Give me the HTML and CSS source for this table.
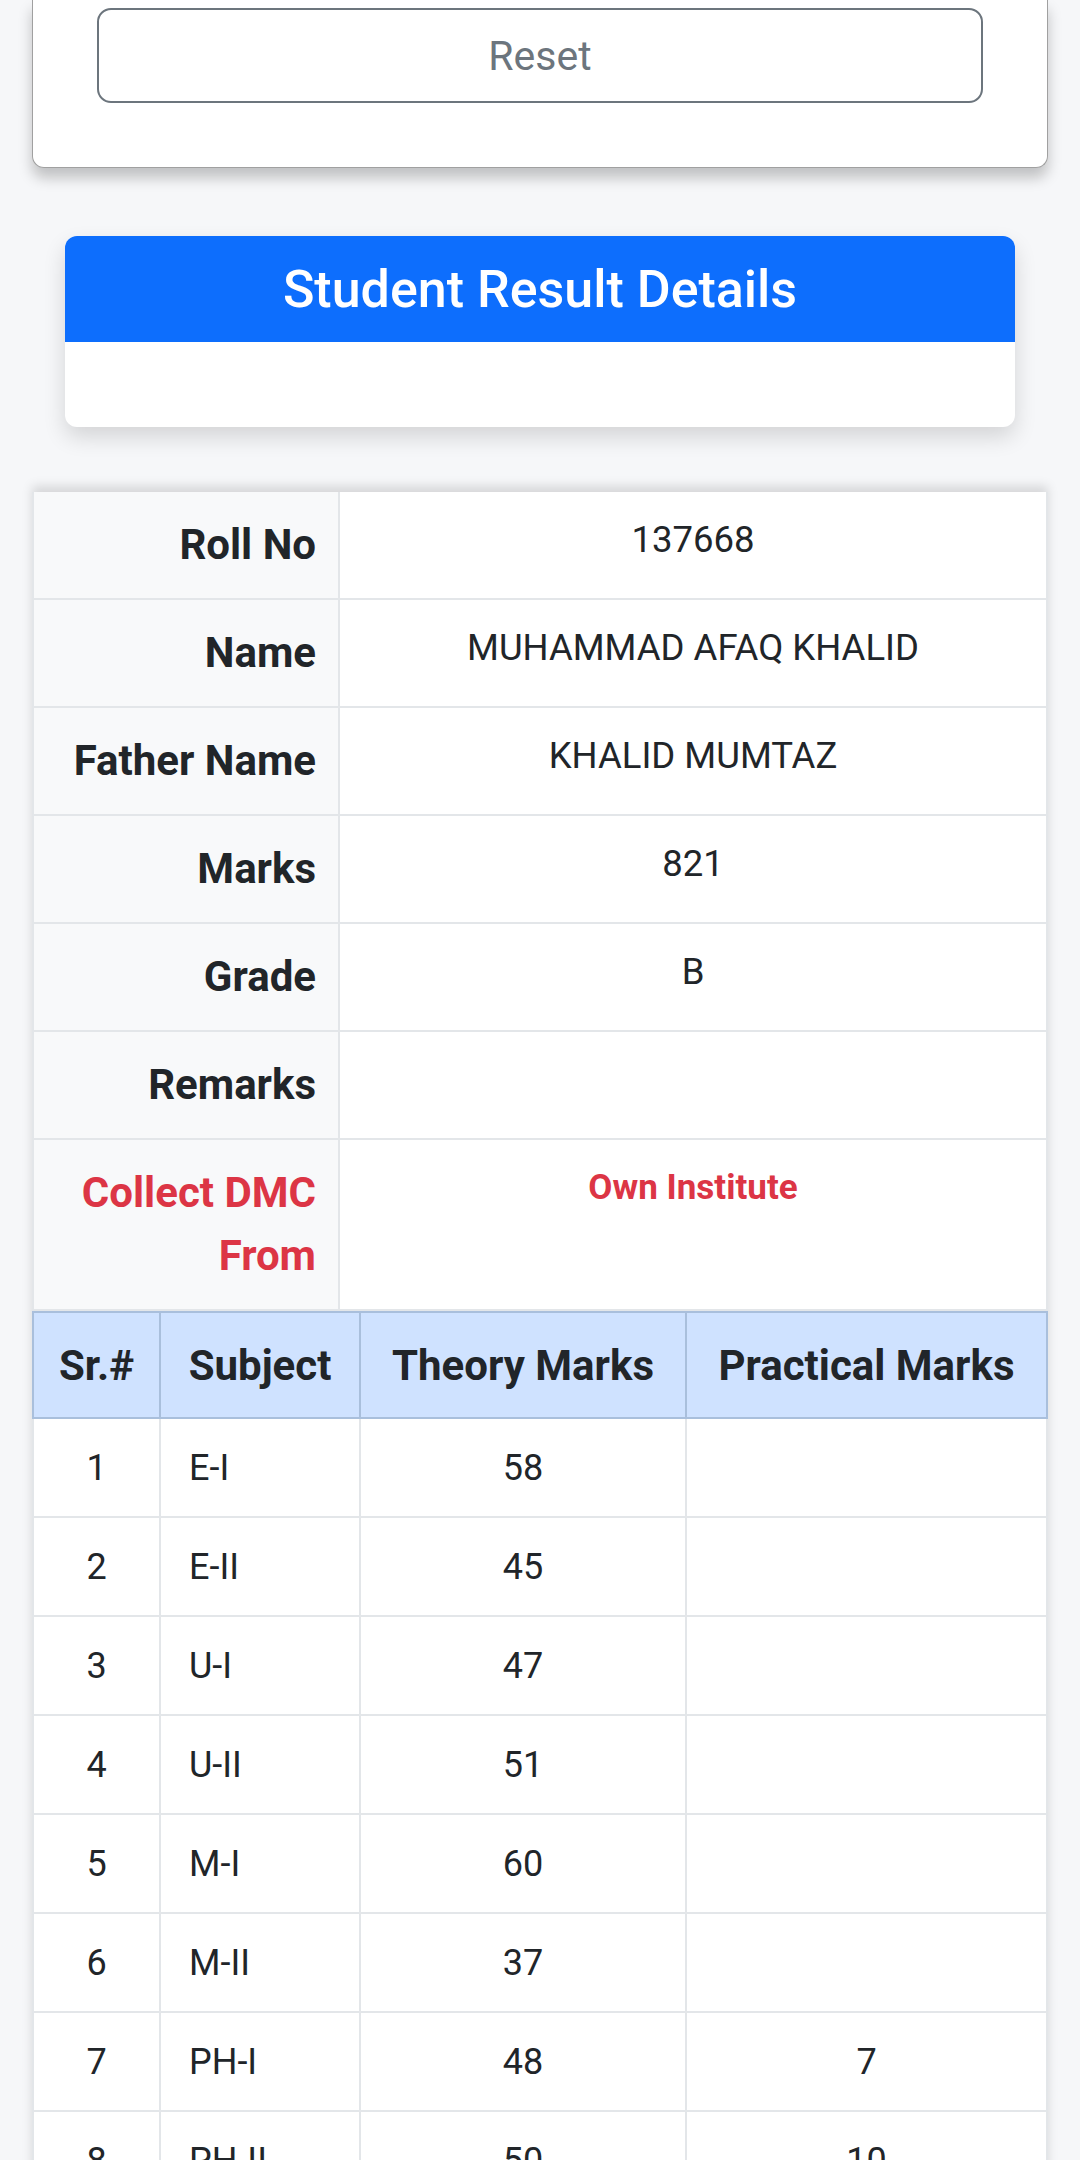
FILE: index.html
```html
<!DOCTYPE html>
<html lang="en">
<head>
  <meta charset="UTF-8" />
  <title>Student Result</title>
  <link rel="stylesheet" href="styles.css">
</head>
<body>

  <!-- Formulario de busca (parte de baixo) -->
  <div class="search-card">
    <button class="btn-reset" type="reset">Reset</button>
  </div>

  <div class="result-card">
    <div class="result-header">Student Result Details</div>
    <div class="result-body"></div>
  </div>

  <div class="result-tables">
    <table class="info-table">
      <tr><th>Roll No</th><td>137668</td></tr>
      <tr><th>Name</th><td>MUHAMMAD AFAQ KHALID</td></tr>
      <tr><th>Father Name</th><td>KHALID MUMTAZ</td></tr>
      <tr><th>Marks</th><td>821</td></tr>
      <tr><th>Grade</th><td>B</td></tr>
      <tr><th>Remarks</th><td></td></tr>
      <tr class="dmc"><th>Collect DMC From</th><td>Own Institute</td></tr>
    </table>

    <table class="marks-table">
      <colgroup>
        <col class="col-sr">
        <col class="col-subject">
        <col class="col-theory">
        <col>
      </colgroup>
      <thead>
        <tr>
          <th>Sr.#</th>
          <th>Subject</th>
          <th>Theory Marks</th>
          <th>Practical Marks</th>
        </tr>
      </thead>
      <tbody>
        <tr><td>1</td><td class="subject">E-I</td><td>58</td><td></td></tr>
        <tr><td>2</td><td class="subject">E-II</td><td>45</td><td></td></tr>
        <tr><td>3</td><td class="subject">U-I</td><td>47</td><td></td></tr>
        <tr><td>4</td><td class="subject">U-II</td><td>51</td><td></td></tr>
        <tr><td>5</td><td class="subject">M-I</td><td>60</td><td></td></tr>
        <tr><td>6</td><td class="subject">M-II</td><td>37</td><td></td></tr>
        <tr><td>7</td><td class="subject">PH-I</td><td>48</td><td>7</td></tr>
        <tr><td>8</td><td class="subject">PH-II</td><td>50</td><td>10</td></tr>
      </tbody>
    </table>
  </div>

</body>
</html>
```

FILE: styles.css
```css
html, body {
  height: 2160px;
  overflow: hidden;
}

body {
  margin: 0;
  font-family: Roboto, "Liberation Sans", Arial, sans-serif;
  background: #f6f7f9;
  color: #212529;
}

/* Card do formulario */
.search-card {
  margin: 0 32px;
  padding: 8px 64px 64px;
  background: #fff;
  border: 1px solid #a0a0a0;
  border-top: none;
  border-radius: 0 0 12px 12px;
  box-shadow: 0 10px 14px rgba(0, 0, 0, 0.22);
}

.btn-reset {
  display: block;
  width: 100%;
  height: 95px;
  background: #fff;
  color: #6c757d;
  border: 2px solid #6c757d;
  border-radius: 14px;
  font-family: inherit;
  font-size: 41px;
}

.result-card {
  margin: 68px 65px 0;
  background: #fff;
  border-radius: 12px;
  overflow: hidden;
  box-shadow: 0 10px 22px rgba(0, 0, 0, 0.14);
}

.result-header {
  height: 106px;
  display: flex;
  align-items: center;
  justify-content: center;
  background: #0d6efd;
  color: #fff;
  font-size: 52px;
  font-weight: 500;
}

.result-body {
  height: 85px;
}

.result-tables {
  margin: 65px 32px 0;
  background: #fff;
  box-shadow: 0 -6px 10px rgba(0, 0, 0, 0.13);
}

table {
  width: 100%;
  border-collapse: collapse;
  table-layout: fixed;
}

.info-table th,
.info-table td {
  border: 2px solid #e3e6e9;
  padding: 21px 22px 22px;
  vertical-align: top;
}

.info-table tr:first-child th,
.info-table tr:first-child td {
  border-top: none;
}

.info-table th {
  width: 260px;
  background: #f8f9fa;
  text-align: right;
  font-size: 42px;
  line-height: 63px;
  font-weight: 700;
}

.info-table td {
  text-align: center;
  font-size: 36.5px;
  line-height: 54px;
}

.dmc th,
.dmc td {
  color: #dc3545;
  font-weight: 700;
}

.dmc td {
  font-size: 35px;
}

.col-sr { width: 127px; }
.col-subject { width: 200px; }
.col-theory { width: 326px; }

.marks-table th,
.marks-table td {
  border: 2px solid #e3e6e9;
  text-align: center;
  vertical-align: middle;
}

.marks-table th {
  height: 104px;
  padding: 0 8px;
  background: #cfe2ff;
  border-color: #a9bfdc;
  font-size: 42px;
  font-weight: 700;
  white-space: nowrap;
}

.marks-table td {
  height: 97px;
  padding: 0 8px;
  font-size: 36px;
}

.marks-table td.subject {
  text-align: left;
  padding-left: 28px;
}
```
